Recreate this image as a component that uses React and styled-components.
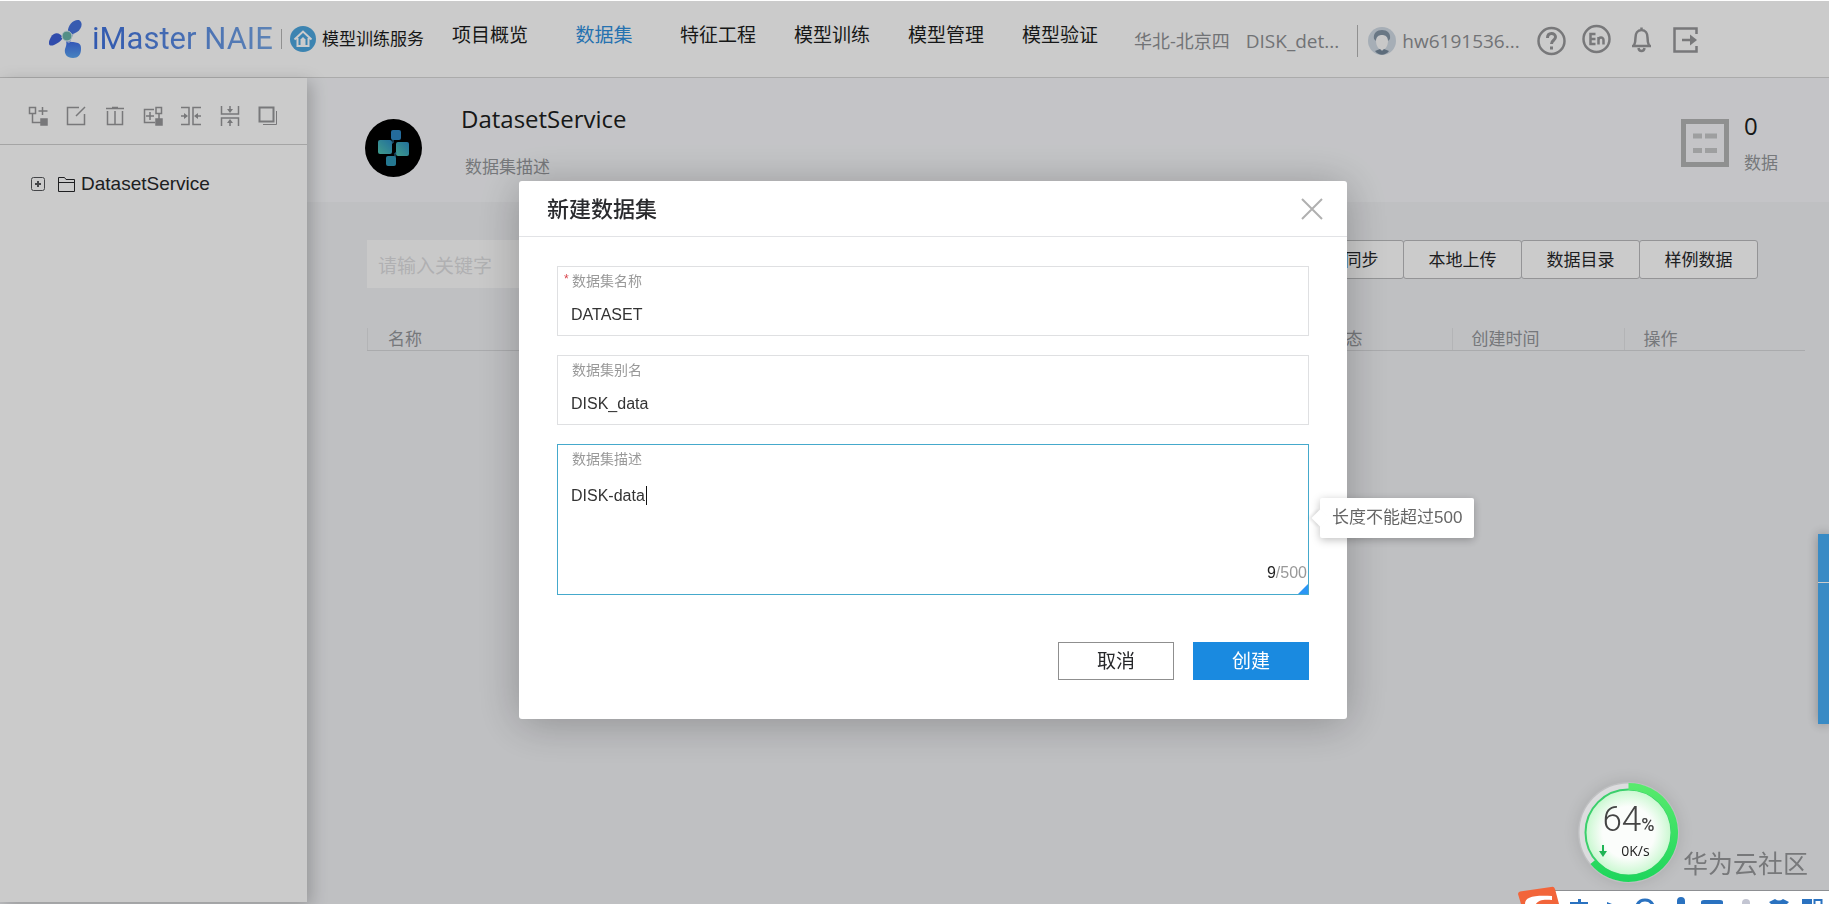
import { useState } from "react";
import styled, { createGlobalStyle } from "styled-components";

const GlobalStyle = createGlobalStyle`
  * {
    box-sizing: border-box;
  }

  body {
    margin: 0;
    color: #1c1d20;
    background: #eff0f3;
    font-family: "Open Sans", "Noto Sans CJK SC", sans-serif;
  }

  button, input, textarea {
    font-family: inherit;
  }
`;

/* PAGE */
const Page = styled.div`
  display: flex;
  flex-direction: column;
  min-height: 100vh;
  padding-bottom: 2px;
`;

const Body = styled.div`
  display: flex;
  flex: 1;
`;

/* HEADER */
const Header = styled.header`
  display: flex;
  align-items: center;
  height: 78px;
  padding-left: 49px;
  background: #fefefe;
  border-bottom: 1px solid #d6d6d6;
  white-space: nowrap;
`;

const Brand = styled.a`
  display: flex;
  align-items: center;
  gap: 10px;
  text-decoration: none;
`;

const BrandName = styled.span`
  font-family: Roboto, sans-serif;
  font-size: 31px;
  line-height: 40px;
  color: transparent;
  background: linear-gradient(90deg, #3d6fdc, #74a4e4);
  background-clip: text;
`;

const Divider = styled.span`
  width: 1px;
  height: ${(props) => props.$height || 20}px;
  margin: 0 ${(props) => props.$gap || 8}px;
  background: #b4b4b4;
`;

const Service = styled.a`
  display: flex;
  align-items: center;
  gap: 6px;
  color: #1c1d20;
  font-size: 17px;
  line-height: 24px;
  text-decoration: none;
`;

const Nav = styled.nav`
  display: flex;
  gap: 38px;
  margin-left: 28px;
  padding-bottom: 8px;
`;

const NavLink = styled.a`
  min-width: 76px;
  color: ${(props) => (props.$active ? "#2f8fdc" : "#1c1d20")};
  font-size: 19px;
  line-height: 28px;
  text-align: center;
  text-decoration: none;
`;

const Account = styled.div`
  display: flex;
  align-items: center;
  margin-left: 36px;
  padding-top: 4px;
  color: #8e9094;
  line-height: 28px;
`;

const Region = styled.span`
  font-size: 18px;
`;

const Project = styled.span`
  margin: 0 8px 0 16px;
  font-size: 19px;
`;

const User = styled.span`
  display: flex;
  align-items: center;
  gap: 6px;
  font-size: 19px;
`;

const HeaderIcons = styled.div`
  display: flex;
  align-items: center;
  gap: 16px;
  margin-left: 17px;
`;

const IconButton = styled.button`
  display: flex;
  padding: 0;
  color: #969799;
  background: none;
  border: 0;
  cursor: pointer;
`;

/* SIDEBAR */
const Sidebar = styled.aside`
  position: relative;
  flex: none;
  width: 307px;
  background: #fefefe;
  box-shadow: 4px 4px 16px rgba(0, 0, 0, 0.22);
`;

const Tools = styled.div`
  display: flex;
  align-items: center;
  justify-content: space-between;
  height: 67px;
  padding: 10px 29px 0 28px;
  border-bottom: 1px solid #cfcfcf;
`;

const TreeRow = styled.div`
  display: flex;
  align-items: center;
  gap: 12px;
  margin-top: 27px;
  padding-left: 31px;
`;

const TreeLink = styled.a`
  display: flex;
  align-items: center;
  gap: 5px;
  color: #26272a;
  font-family: "Liberation Sans", sans-serif;
  font-size: 19px;
  line-height: 24px;
  text-decoration: none;
`;

/* CONTENT */
const Main = styled.main`
  flex: 1;
  min-width: 0;
`;

const Hero = styled.section`
  display: flex;
  height: 124px;
  padding: 25px 51px 0 58px;
  background: #f5f6f9;
`;

const HeroIcon = styled.div`
  padding-top: 16px;
`;

const HeroText = styled.div`
  flex: 1;
  margin-left: 39px;
`;

const HeroTitle = styled.h1`
  margin: 0;
  font-size: 24px;
  font-weight: 400;
  line-height: 32px;
`;

const HeroNote = styled.p`
  margin: 20px 4px 0;
  color: #94969a;
  font-size: 17px;
  line-height: 24px;
`;

const Stat = styled.div`
  display: flex;
  gap: 15px;
  padding-top: 11px;
`;

const StatBox = styled.svg`
  margin-top: 5px;
`;

const StatValue = styled.div`
  font-size: 24px;
  line-height: 24px;
`;

const StatName = styled.div`
  margin-top: 13px;
  color: #94969a;
  font-size: 17px;
  line-height: 24px;
`;

const Actions = styled.div`
  display: flex;
  align-items: flex-start;
  justify-content: space-between;
  padding: 38px 71px 0 60px;
`;

const Search = styled.input`
  width: 420px;
  height: 48px;
  padding: 4px 11px 0;
  background: #fcfcfc;
  border: 0;
  font-size: 19px;

  &::placeholder {
    color: #dcdddf;
  }
`;

const ButtonGroup = styled.div`
  display: flex;
`;

const ActionButton = styled.button`
  width: 119px;
  height: 39px;
  padding: 0;
  color: #26272a;
  background: #fefefe;
  border: 1px solid #b9babc;
  border-radius: 3px;
  font-size: 17px;
  line-height: 24px;

  & + & {
    margin-left: -1px;
  }
`;

const TableWrap = styled.div`
  padding: 40px 24px 0 60px;
`;

const Table = styled.table`
  width: 100%;
  border-collapse: collapse;
  table-layout: fixed;
`;

const HeadCell = styled.th`
  width: ${(props) => (props.$width ? `${props.$width}px` : "auto")};
  height: 22px;
  padding: 0 0 0 ${(props) => props.$indent || 19}px;
  color: #94969a;
  border-left: 1px solid #e0e1e4;
  border-bottom: 1px solid #d5d6d9;
  font-size: 17px;
  font-weight: 400;
  line-height: 22px;
  text-align: left;
`;

const Dock = styled.aside`
  position: fixed;
  top: 534px;
  right: 0;
  width: 11px;
  background: #48aef7;
  box-shadow: 0 0 12px rgba(0, 0, 0, 0.3);
`;

const DockItem = styled.button`
  display: block;
  width: 100%;
  height: ${(props) => props.$height}px;
  padding: 0;
  background: none;
  border: 0;

  & + & {
    border-top: 1px solid #fff;
  }
`;

/* DIALOG */
const Overlay = styled.div`
  position: fixed;
  inset: 1px 0 0;
  display: flex;
  align-items: flex-start;
  justify-content: center;
  padding: 180px 0 0 37px;
  background: rgba(0, 0, 0, 0.2);
`;

const Dialog = styled.section`
  width: 828px;
  background: #fff;
  border-radius: 3px;
  box-shadow: 0 4px 44px rgba(0, 0, 0, 0.26);
`;

const DialogHeader = styled.div`
  display: flex;
  align-items: center;
  justify-content: space-between;
  height: 56px;
  padding: 0 24px 0 28px;
  border-bottom: 1px solid #e2e3e6;
`;

const DialogTitle = styled.h2`
  margin: 0;
  padding-bottom: 2px;
  color: #2a2b2e;
  font-size: 22px;
  font-weight: 500;
  line-height: 32px;
`;

const Form = styled.form`
  display: flex;
  flex-direction: column;
  gap: 19px;
  padding: 29px 38px 39px;
`;

const Field = styled.div`
  position: relative;
  display: flex;
  flex-direction: column;
  height: ${(props) => (props.$tall ? 151 : 70)}px;
  padding: 4px 13px 0;
  border: 1px solid ${(props) => (props.$active ? "#45a9cc" : "#dfe0e2")};
  font-family: "Liberation Sans", "Noto Sans CJK SC", sans-serif;
`;

const Label = styled.label`
  padding-left: 1px;
  color: #999;
  font-size: 14px;
  line-height: 20px;
`;

const Required = styled.span`
  position: absolute;
  top: 5px;
  left: 6px;
  color: #d9454c;
  font-size: 12px;
  line-height: 14px;
`;

const TextInput = styled.input`
  margin-top: 9px;
  padding: 0;
  color: #333;
  background: none;
  border: 0;
  outline: 0;
  font-size: 16px;
  line-height: 30px;
`;

const TextArea = styled.textarea`
  flex: 1;
  margin-top: 9px;
  padding: 3px 0 0;
  color: #333;
  background: none;
  border: 0;
  outline: 0;
  resize: none;
  font-size: 16px;
  line-height: 30px;
`;

const Caret = styled.span`
  position: absolute;
  top: 41px;
  left: 88px;
  width: 1px;
  height: 19px;
  background: #111;
`;

const Counter = styled.span`
  position: absolute;
  right: 1px;
  bottom: 11px;
  color: #999;
  font-size: 16px;
  line-height: 20px;
`;

const Count = styled.span`
  color: #222;
`;

const Grip = styled.span`
  position: absolute;
  right: 0;
  bottom: 0;
  border: 5px solid;
  border-color: transparent #2b96f5 #2b96f5 transparent;
`;

const Tip = styled.div`
  position: absolute;
  top: 53px;
  left: calc(100% + 12px);
  padding: 8px 12px;
  color: #666;
  background: #fff;
  border-radius: 2px;
  box-shadow: 0 2px 8px rgba(0, 0, 0, 0.25);
  font-size: 17px;
  line-height: 24px;
  white-space: nowrap;

  &::before {
    content: "";
    position: absolute;
    top: 14px;
    left: -6px;
    width: 12px;
    height: 12px;
    background: #fff;
    box-shadow: -2px 2px 3px rgba(0, 0, 0, 0.1);
    transform: rotate(45deg);
  }
`;

const Footer = styled.div`
  display: flex;
  justify-content: flex-end;
  gap: 19px;
  padding-top: 28px;
`;

const FormButton = styled.button`
  width: 116px;
  height: 38px;
  padding: 0;
  color: ${(props) => (props.$primary ? "#fff" : "#26272a")};
  background: ${(props) => (props.$primary ? "#1a8ae0" : "#fff")};
  border: 1px solid ${(props) => (props.$primary ? "#1a8ae0" : "#8f8f8f")};
  font-size: 19px;
  line-height: 28px;
`;

/* DESKTOP WIDGETS */
const Watermark = styled.div`
  position: fixed;
  right: 21px;
  bottom: 23px;
  color: #77787a;
  font-size: 25px;
  line-height: 36px;
`;

const Monitor = styled.div`
  position: fixed;
  right: 150px;
  bottom: 21px;
  width: 101px;
  height: 101px;
  border-radius: 50%;
  box-shadow: 0 0 16px rgba(0, 0, 0, 0.12);
`;

const MonitorText = styled.div`
  position: absolute;
  inset: 0;
  display: flex;
  flex-direction: column;
  align-items: center;
  padding-top: 18px;
`;

const Percent = styled.div`
  color: #444;
  font-family: Roboto, sans-serif;
  font-size: 35px;
  font-weight: 300;
  line-height: 40px;
`;

const PercentSign = styled.span`
  font-size: 18px;
  font-weight: 500;
`;

const Speed = styled.div`
  display: flex;
  align-items: center;
  gap: 14px;
  margin-top: -4px;
  padding-right: 8px;
  color: #222;
  font-size: 14px;
  line-height: 20px;
`;

const ImeBar = styled.div`
  position: fixed;
  right: 0;
  bottom: 0;
  width: 311px;
  height: 18px;
`;

const tools = [
  {
    name: "新增",
    art: (
      <>
        <path d="M1.5 1.5h6v6h-6zM4.5 8v8.500H13M14.500 1v8M10.500 5h9" />
        <path d="M13 13h6v6h-6z" fill="currentColor" />
      </>
    ),
  },
  { name: "编辑", art: <path d="M13 1.500H1.500v17h17V8M10 10l9-9" /> },
  { name: "删除", art: <path d="M1 2.500h18M7 1.500h6M2.500 5v13.500h15V5M10 5v13" /> },
  {
    name: "添加分组",
    art: (
      <>
        <path d="M11 3.500H1.500v13H12M13 1.500h5.500v6H13zM16 7v6M7 6v8M3 10h8" />
        <path d="M13 13h6v6h-6z" fill="currentColor" />
      </>
    ),
  },
  {
    name: "横向合并",
    art: (
      <>
        <path d="M0 1.500h8v17H0M20 1.500h-8v17h8M0 10h4M20 10h-4" />
        <path d="M3 7l4 3-4 3zM17 7l-4 3 4 3z" fill="currentColor" stroke="none" />
      </>
    ),
  },
  {
    name: "纵向合并",
    art: (
      <>
        <path d="M1.500 0v8h17V0M1.500 20v-8h17v8M10 0v4M10 20v-4" />
        <path d="M7 3l3 4 3-4zM7 17l3-4 3 4z" fill="currentColor" stroke="none" />
      </>
    ),
  },
  {
    name: "复制",
    art: (
      <>
        <path d="M1.500 1.500h14v14h-14z" strokeWidth="2" />
        <path d="M18.500 5v13.500H5" strokeWidth="1" />
      </>
    ),
  },
];

const navItems = ["项目概览", "数据集", "特征工程", "模型训练", "模型管理", "模型验证"];
const actions = ["数据同步", "本地上传", "数据目录", "样例数据"];

const BrandMark = () => (
  <svg width="33" height="40" viewBox="0 0 33 40" aria-hidden="true">
    <defs>
      <linearGradient id="petal" x1="0" y1="0" x2="0" y2="1">
        <stop offset="0" stopColor="#3f6be6" />
        <stop offset="1" stopColor="#5aa4f0" />
      </linearGradient>
    </defs>
    <path d="M19 14C18 7 24 0 30 1c5 3 2 10-2 12-3 2-6 3-9 1z" fill="#4672dc" />
    <path d="M14 19C11 13 5 13 2 18c-4 7-2 10 3 8 4-2 7-4 9-7z" fill="#3c5fd8" />
    <path d="M17 22c5 2 16-1 15 8 0 6-3 9-8 9-6 0-9-4-8-9 1-3 2-5 1-8z" fill="url(#petal)" />
    <path d="M12 18l8 6 4-9" fill="none" stroke="#9fb9e8" strokeWidth="1" />
    <circle cx="18" cy="17" r="5" fill="#68b3a8" stroke="#dfeef4" />
  </svg>
);

const HomeIcon = () => (
  <svg width="26" height="26" viewBox="0 0 26 26" aria-hidden="true">
    <circle cx="13" cy="13" r="13" fill="#4ba5de" />
    <path d="M4.500 13.500L13 5.500l8.500 8M7.500 12v8h11v-8" fill="none" stroke="#fff" strokeWidth="2" />
    <path d="M10.500 19v-5.500L13 11l2.500 2.500V19z" fill="#fff" />
  </svg>
);

const Avatar = () => (
  <svg width="28" height="28" viewBox="0 0 28 28" aria-hidden="true">
    <circle cx="14" cy="14" r="14" fill="#d0dae4" />
    <path d="M8 14c0-4 3-6 6-6s6 2 6 6c0 5-3 9-6 9s-6-4-6-9z" fill="#fafafa" />
    <path d="M6 12C5 6 9 3 14 3s9 3 8 9l-2 2c0-5-3-6-6-6s-6 1-6 6z" fill="#8495a6" />
    <path d="M7 24l5-2 2 2 2-2 5 2c-4 5-10 5-14 0z" fill="#75879a" />
  </svg>
);

const ServiceIcon = () => (
  <svg width="57" height="58" viewBox="0 0 57 58" aria-hidden="true">
    <defs>
      <linearGradient id="tile" x1="0" y1="1" x2="1" y2="0">
        <stop offset="0" stopColor="#52c4ae" />
        <stop offset="1" stopColor="#2b8cc4" />
      </linearGradient>
    </defs>
    <ellipse cx="28.500" cy="29" rx="28.500" ry="29" fill="#000" />
    <g fill="url(#tile)">
      <rect x="13" y="21" width="14" height="14" rx="2" />
      <rect x="31" y="23" width="13" height="14" rx="2" />
    </g>
    <rect x="26" y="11" width="10" height="10" rx="2" fill="#2d86c4" />
    <rect x="21" y="37" width="10" height="10" rx="2" fill="#2f96b6" />
    <path d="M28 20v4h-2M30 38v-4h2" stroke="#2f88b6" fill="none" />
  </svg>
);

const UserProfileIcons = () => (
  <HeaderIcons>
    <IconButton aria-label="帮助">
      <svg width="29" height="30" viewBox="0 0 29 30" fill="none" stroke="currentColor">
        <circle cx="14.500" cy="15" r="13" strokeWidth="2.500" />
        <path d="M10.500 12c0-6 8-5.500 8-1 0 3.500-4 3-4 7M14.500 20.500v3" strokeWidth="3" />
      </svg>
    </IconButton>
    <IconButton aria-label="English">
      <svg width="29" height="34" viewBox="0 0 29 34" fill="none" stroke="currentColor" strokeWidth="2.500">
        <circle cx="14.500" cy="15" r="13" />
        <path d="M13.500 10H8.500v10h5M8.500 15h5M16.500 20.500V13M16.500 16c0-3 5-3.500 5 0v4.500" />
      </svg>
    </IconButton>
    <IconButton aria-label="通知">
      <svg width="29" height="34" viewBox="0 0 29 34" fill="none" stroke="currentColor" strokeWidth="2.500">
        <path d="M5 22h19M7 21.500c1-2 1.500-4 1.500-8 0-4 2-7.500 6-7.500s6 3.500 6 7.500c0 4 .5 6 1.500 8M14.500 3.500v3" />
        <path d="M11.500 24c.5 4 5.500 4 6 0" />
      </svg>
    </IconButton>
    <IconButton aria-label="退出">
      <svg width="26" height="32" viewBox="0 0 26 32" fill="none" stroke="currentColor" strokeWidth="2.500">
        <path d="M24.500 9V3.500h-22v23h22V21M10 15h12" />
        <path d="M18 9.500l7 5.500-7 5.500z" fill="currentColor" stroke="none" />
      </svg>
    </IconButton>
  </HeaderIcons>
);

const CreateDialog = () => {
  const [name, setName] = useState("DATASET");
  const [alias, setAlias] = useState("DISK_data");
  const [note, setNote] = useState("DISK-data");

  return (
    <Overlay>
      <Dialog role="dialog" aria-labelledby="dialog-title">
        <DialogHeader>
          <DialogTitle id="dialog-title">新建数据集</DialogTitle>
          <IconButton aria-label="关闭">
            <svg width="22" height="22" viewBox="0 0 22 22" stroke="#b0b0b0" strokeWidth="2">
              <path d="M1 1l20 20M21 1L1 21" />
            </svg>
          </IconButton>
        </DialogHeader>

        <Form onSubmit={(e) => e.preventDefault()}>
          <Field>
            <Required>*</Required>
            <Label htmlFor="name">数据集名称</Label>
            <TextInput id="name" value={name} onChange={(e) => setName(e.target.value)} />
          </Field>
          <Field>
            <Label htmlFor="alias">数据集别名</Label>
            <TextInput id="alias" value={alias} onChange={(e) => setAlias(e.target.value)} />
          </Field>
          <Field $tall $active>
            <Label htmlFor="note">数据集描述</Label>
            <TextArea id="note" maxLength={500} value={note} onChange={(e) => setNote(e.target.value)} />
            <Caret />
            <Counter><Count>{note.length}</Count>/500</Counter>
            <Grip />
            <Tip role="tooltip">长度不能超过500</Tip>
          </Field>
          <Footer>
            <FormButton type="button">取消</FormButton>
            <FormButton type="submit" $primary>创建</FormButton>
          </Footer>
        </Form>
      </Dialog>
    </Overlay>
  );
};

const SpeedMonitor = () => (
  <Monitor>
    <svg width="101" height="101" viewBox="0 0 101 101" aria-hidden="true">
      <defs>
        <radialGradient id="glow">
          <stop offset="0.6" stopColor="#fbfdfb" />
          <stop offset="1" stopColor="#c8f8cf" />
        </radialGradient>
        <linearGradient id="ring" x1="0" y1="0" x2="0" y2="1">
          <stop offset="0" stopColor="#57ea6d" />
          <stop offset="1" stopColor="#1fd65c" />
        </linearGradient>
      </defs>
      <circle cx="50.500" cy="50.500" r="46" fill="none" stroke="#dcdcde" strokeWidth="6" />
      <circle cx="50.500" cy="50.500" r="43" fill="url(#glow)" stroke="#3bcf6c" strokeWidth="2" />
      <path d="M50.500 4.500a46 46 0 1 1-35.400 75.300" fill="none" stroke="url(#ring)" strokeWidth="7" />
    </svg>
    <MonitorText>
      <Percent>64<PercentSign>%</PercentSign></Percent>
      <Speed>
        <svg width="8" height="12" viewBox="0 0 8 12" aria-hidden="true">
          <path d="M3 0h2v6h3l-4 6-4-6h3z" fill="#1fb455" />
        </svg>
        0K/s
      </Speed>
    </MonitorText>
  </Monitor>
);

const InputMethodBar = () => (
  <ImeBar>
    <svg width="311" height="18" viewBox="0 0 311 18" aria-hidden="true">
      <path d="M12 4h299v14H12z" fill="#fff" />
      <path d="M36 4.500h275" stroke="#8d8f92" />
      <path d="M0 8Q0 6 2 5.500L33 1q3-1 4 2l4 15H3z" fill="#f2653a" />
      <path d="M7 18c0-7 8-9 27-8v4c-8-1-14 0-16 4z" fill="#fff" />
      <g fill="#2a72c0">
        <path d="M52 16h18v2H52zM60 13h3v5h-3zM89 16l5 2h-5zM183 18v-2q0-2 3-2h16q3 0 3 2v2z" />
        <path d="M159 18v-3q0-4 4-4t4 4v3zM253 18l-2-2 6-3q4 3 8 0l6 3-2 2zM284 13h10v5h-10z" />
      </g>
      <path d="M119 19a9 9 0 0 1 16 0" fill="none" stroke="#2a72c0" strokeWidth="3" />
      <path d="M296.500 18v-4h7v4" fill="none" stroke="#2a72c0" strokeWidth="2" />
      <circle cx="228" cy="17" r="4" fill="#c3c5d2" />
    </svg>
  </ImeBar>
);

const App = () => {
  return (
    <>
      <GlobalStyle />
      <Page>
        <Header>
          <Brand href="#">
            <BrandMark />
            <BrandName>iMaster NAIE</BrandName>
          </Brand>
          <Divider />
          <Service href="#">
            <HomeIcon />
            模型训练服务
          </Service>
          <Nav>
            {navItems.map((item) => (
              <NavLink key={item} href="#" $active={item === "数据集"}>{item}</NavLink>
            ))}
          </Nav>
          <Account>
            <Region>华北-北京四</Region>
            <Project>DISK_det...</Project>
            <Divider $height={32} $gap={10} />
            <User>
              <Avatar />
              hw6191536...
            </User>
            <UserProfileIcons />
          </Account>
        </Header>

        <Body>
          <Sidebar>
            <Tools>
              {tools.map((tool) => (
                <IconButton key={tool.name} aria-label={tool.name}>
                  <svg width="20" height="20" viewBox="0 0 20 20" fill="none" stroke="currentColor" strokeWidth="1.500">
                    {tool.art}
                  </svg>
                </IconButton>
              ))}
            </Tools>
            <TreeRow>
              <IconButton aria-label="展开">
                <svg width="14" height="14" viewBox="0 0 14 14" fill="none" stroke="#55575a">
                  <rect x="0.500" y="0.500" width="13" height="13" rx="2" />
                  <path d="M4 7h6M7 4v6" strokeWidth="2" />
                </svg>
              </IconButton>
              <TreeLink href="#">
                <svg width="19" height="17" viewBox="0 0 19 17" fill="none" stroke="#26272a" aria-hidden="true">
                  <path d="M1.500 15.500v-14h6l1.500 2h8.500v12zM1.500 6.500h16" />
                </svg>
                DatasetService
              </TreeLink>
            </TreeRow>
          </Sidebar>

          <Main>
            <Hero>
              <HeroIcon>
                <ServiceIcon />
              </HeroIcon>
              <HeroText>
                <HeroTitle>DatasetService</HeroTitle>
                <HeroNote>数据集描述</HeroNote>
              </HeroText>
              <Stat>
                <StatBox width="48" height="48" viewBox="0 0 48 48" fill="none" aria-hidden="true">
                  <path d="M2.500 2.500h43v43h-43z" stroke="#b3b4b5" strokeWidth="5" />
                  <path d="M12 17h9M24 17h12M12 31.500h9M24 31.500h12" stroke="#c6c7c9" strokeWidth="5" />
                </StatBox>
                <div>
                  <StatValue>0</StatValue>
                  <StatName>数据</StatName>
                </div>
              </Stat>
            </Hero>

            <Actions>
              <Search aria-label="搜索" placeholder="请输入关键字" />
              <ButtonGroup>
                {actions.map((item) => (
                  <ActionButton key={item}>{item}</ActionButton>
                ))}
              </ButtonGroup>
            </Actions>

            <TableWrap>
              <Table>
                <thead>
                  <tr>
                    <HeadCell $indent={20}>名称</HeadCell>
                    <HeadCell $width={143}>状态</HeadCell>
                    <HeadCell $width={172}>创建时间</HeadCell>
                    <HeadCell $width={181}>操作</HeadCell>
                  </tr>
                </thead>
              </Table>
            </TableWrap>
          </Main>
        </Body>
      </Page>

      <Dock>
        <DockItem $height={48} aria-label="消息" />
        <DockItem $height={142} aria-label="反馈" />
      </Dock>

      <CreateDialog />

      <Watermark>华为云社区</Watermark>
      <SpeedMonitor />
      <InputMethodBar />
    </>
  );
};

export default App;
